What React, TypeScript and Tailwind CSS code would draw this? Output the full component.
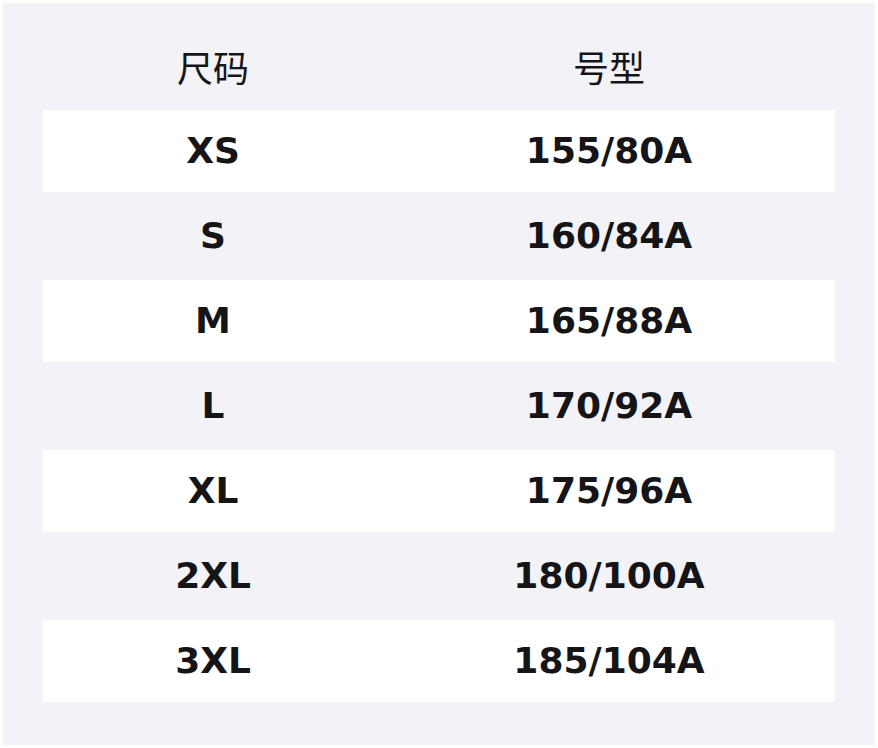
const sizes = [
  { size: 'XS', fit: '155/80A' },
  { size: 'S', fit: '160/84A' },
  { size: 'M', fit: '165/88A' },
  { size: 'L', fit: '170/92A' },
  { size: 'XL', fit: '175/96A' },
  { size: '2XL', fit: '180/100A' },
  { size: '3XL', fit: '185/104A' },
];

export default function App() {
  return (
    <div className="min-h-screen bg-white p-[3px] font-['DejaVu_Sans','Noto_Sans_CJK_SC',sans-serif] text-[#151517]">
      <div className="bg-[#f2f2f7] px-10 pt-[22px] pb-[43px] flex flex-col gap-[3px]">
        <div className="grid grid-cols-[340px_1fr] h-[82px] items-center text-center text-[36px] font-['Noto_Sans_CJK_SC',sans-serif] font-normal">
          <div>尺码</div>
          <div>号型</div>
        </div>
        {sizes.map((row, i) => (
          <div
            key={row.size}
            className={`grid grid-cols-[340px_1fr] h-[82px] items-center text-center text-[36px] font-bold ${
              i % 2 === 0 ? 'bg-white' : ''
            }`}
          >
            <div>{row.size}</div>
            <div>{row.fit}</div>
          </div>
        ))}
      </div>
    </div>
  );
}
